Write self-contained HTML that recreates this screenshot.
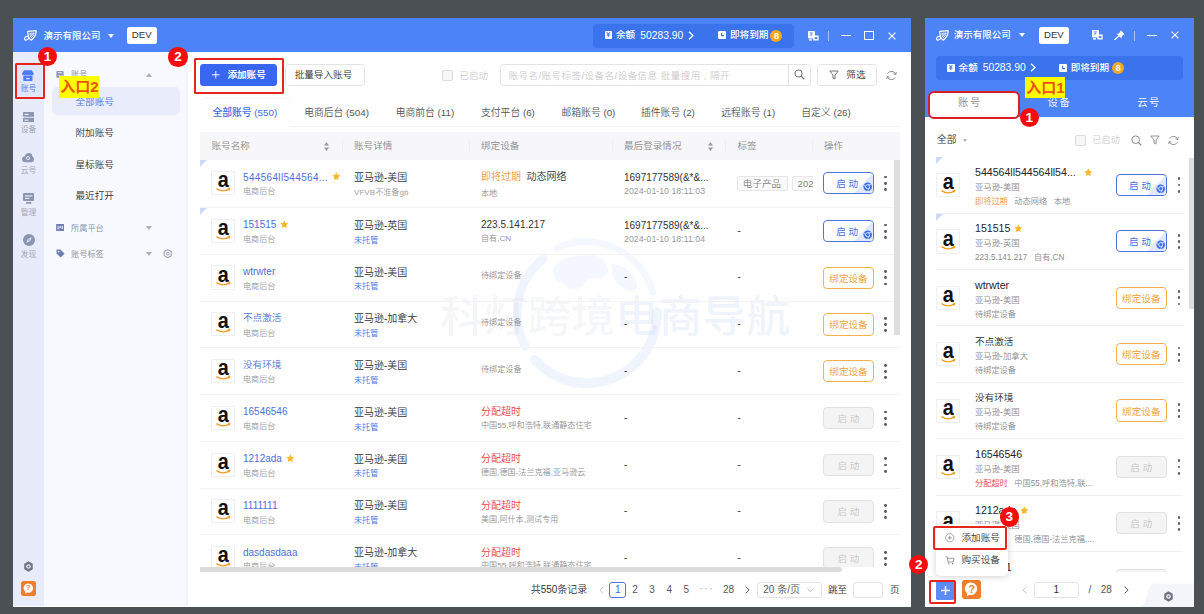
<!DOCTYPE html>
<html lang="zh-CN">
<head>
<meta charset="utf-8">
<title>账号管理</title>
<style>
*{box-sizing:border-box;margin:0;padding:0}
html,body{width:1204px;height:614px;overflow:hidden}
body{background:#4b5055;font-family:"Liberation Sans","Noto Sans CJK SC",sans-serif;font-size:9.6px;color:#333;position:relative;font-weight:350}
.abs,.t,.btn,.amz,.kebab,.tag,.row,.rrow,.num,.box{position:absolute}
.t{white-space:nowrap;line-height:1.3}
svg{display:block}
/* windows */
#mw{left:13px;top:18px;width:898.3px;height:588.5px;background:#fff}
#rw{left:924.6px;top:18px;width:269.4px;height:588.5px;background:#fff}
.hd{background:#4c83f6}
.w{color:#fff}
.co{font-size:9.5px;font-weight:500;color:#fff;letter-spacing:0}
.dev{background:#fff;border-radius:2.5px;color:#333;font-size:9.6px;text-align:center;line-height:16.6px}
.bar{background:#3b73ec;border-radius:4px}
.bt{font-size:9.6px;color:#fff;font-weight:500}
.bn{font-size:10.3px;color:#fff;font-weight:400}
.dot8{background:#f5a623;border-radius:50%;color:#fff;font-size:9px;text-align:center;font-weight:700}
/* number circles & red boxes */
.num{width:19.4px;height:19.4px;border-radius:50%;background:#f50d0d;color:#fff;font-weight:700;font-size:13.5px;text-align:center;line-height:19.4px}
.box{border:2.2px solid #e5251e;border-radius:1.5px}
.lab{background:#ffff00;color:#ec5212;font-weight:700;font-size:15px;line-height:21px;text-align:center}
/* sidebar */
.il{font-size:7.8px;color:#9ea4b4;text-align:center;width:31px}
.sd{font-size:9.6px;color:#333}
.sg{font-size:8.2px;color:#8a8f9c}
/* toolbar */
.pb{background:#3866f0;border-radius:3.5px;color:#fff;font-weight:700;font-size:9.6px}
.wb{background:#fff;border:1px solid #e3e3e6;border-radius:3.5px;color:#333;font-size:9.6px}
.tab{font-size:9.8px;color:#555}
.th{font-size:9.6px;color:#8c8c8c}
/* table rows */
.sepl{position:absolute;left:0;width:700px;height:1px;background:#f3f3f5}
.rsep{position:absolute;left:11px;width:247px;height:1px;background:#f0f0f2}
.gp{margin-left:6.6px}
.cj{font-size:9.6px !important}
.corner{position:absolute;left:0;top:0;width:0;height:0;border-top:7px solid #ccd9f6;border-right:7px solid transparent}
.amz{width:24.3px;height:24.3px;border:1px solid #efefef;background:#fff;border-radius:1px}
.amz span{position:absolute;left:0;width:100%;top:-3.8px;text-align:center;font-family:"Liberation Sans",sans-serif;font-weight:700;font-size:21.5px;line-height:24px;color:#111;transform:scaleX(0.92)}
.amz svg{position:absolute;left:0;top:0;width:22.5px;height:22.5px}
.star{display:inline-block;width:8.6px;height:8.6px;margin-left:4px;vertical-align:-0.3px}
.nm{font-size:10px;color:#4f6fd8}
.sub{font-size:8.1px;color:#9a9a9a}
.d1{font-size:10px;color:#333}
.g1{color:#939393}
.g2{color:#a3a3a3}
.bl{color:#4a72e8}
.or{color:#f5913a}
.rd{color:#e8413d}
.tag{height:15px;border:1px solid #e6e6e6;border-radius:2px;background:#fafafa;color:#858585;font-size:9.5px;line-height:13px;text-align:center;letter-spacing:0.1px;white-space:nowrap;overflow:hidden}
.tag.clip{border-right:none;border-radius:2px 0 0 2px;text-align:left;padding-left:5px}
.btn{border-radius:4px;font-size:9.6px;text-align:center;overflow:hidden;background:#fff}
.btn span{position:absolute;left:0;right:0;top:0;bottom:0;display:flex;align-items:center;justify-content:center}
.btn.go{border:1px solid #4f76d6;color:#4a6fdc}
.btn.go span{padding-right:2.5px;font-weight:400}
.btn.go .tri{position:absolute;right:0;bottom:0;width:0;height:0;border-bottom:20px solid #dfe8fc;border-left:19px solid transparent}
.btn.go .chr{position:absolute;right:0.8px;bottom:2px;width:9.4px;height:9.4px}
.btn.bind{border:1px solid #f3b04e;color:#f09a2e}
.btn.dis{border:1px solid #e1e1e1;background:#f4f4f4;color:#c6c6c6}
.kebab{width:3px;height:15px}
.kebab i{position:absolute;left:0;width:2.8px;height:2.8px;border-radius:50%;background:#5a5a5a}
.kebab i:nth-child(1){top:0}.kebab i:nth-child(2){top:6.2px}.kebab i:nth-child(3){top:12.4px}
.rn{font-size:10.6px;color:#262626}
.r2{font-size:8.4px;color:#8c8c8c}
.r3{font-size:8.2px;color:#8c8c8c}
.pg{font-size:10px;color:#555}
.wm{font-size:43.75px;color:rgba(110,115,130,0.085);font-weight:500;letter-spacing:0;line-height:1.3}
</style>
</head>
<body>

<!-- ================= MAIN WINDOW ================= -->
<div id="mw" class="abs"></div>
<div class="abs hd" style="left:13px;top:18px;width:898.3px;height:33.6px"></div>
<div class="abs" style="left:13px;top:51.6px;width:31px;height:554.9px;background:#e7ebfa"></div>
<div class="abs" style="left:44px;top:51.6px;width:144px;height:554.9px;background:#f8f9fe"></div>
<div class="abs" style="left:184px;top:51.6px;width:4px;height:554.9px;background:linear-gradient(90deg,#f8f9fe,#eff1f8)"></div>

<!-- header content -->
<svg class="abs" style="left:23.6px;top:30.1px;width:13px;height:11px" viewBox="0 0 26 22"><path d="M7.500 2.800 L24.300 1.200 Q25 12.500 14.500 20.300 Q7.500 15.500 7.500 2.800 Z" fill="none" stroke="#fff" stroke-width="2.400" stroke-linejoin="round"/><path d="M11.800 6.800 L20.300 6 Q20.200 11.800 15 15.300 Q11.900 12.500 11.800 6.800 Z" fill="none" stroke="#fff" stroke-width="1.700"/><path d="M14 9 L18 8.700 Q17.500 11 15.500 12.300 Z" fill="#fff"/><path d="M7.800 12.600 Q1.200 12.600 1.200 17.800 Q1.600 21 5.200 20 Q9 18.600 9.800 15.500" fill="none" stroke="#fff" stroke-width="2.200" stroke-linecap="round"/></svg>
<div class="t co" style="left:43.4px;top:29.8px">演示有限公司</div>
<div class="abs" style="left:107.5px;top:33.8px;width:0;height:0;border-left:3.3px solid transparent;border-right:3.3px solid transparent;border-top:4.4px solid #fff"></div>
<div class="abs dev" style="left:126.8px;top:27px;width:29.8px;height:16.6px">DEV</div>

<div class="abs bar" style="left:593px;top:23.5px;width:200.8px;height:24px"></div>
<div class="abs" style="left:604.5px;top:31.4px;width:7.6px;height:8px;background:#fff;border-radius:1px;color:#3b73ec;font-size:7px;font-weight:700;line-height:8px;text-align:center">¥</div>
<div class="t bt" style="left:616px;top:29.2px">余额</div>
<div class="t bn" style="left:640.3px;top:28.6px">50283.90</div>
<svg class="abs" style="left:688px;top:31px;width:6px;height:9px" viewBox="0 0 6 9"><path d="M1 0.8 L5 4.5 L1 8.2" fill="none" stroke="#fff" stroke-width="1.2"/></svg>
<svg class="abs" style="left:717.8px;top:31.4px;width:8px;height:8px" viewBox="0 0 8 8"><rect width="8" height="8" rx="1" fill="#fff"/><path d="M3.6 1.8 V4.6 H6" fill="none" stroke="#3b73ec" stroke-width="1.1"/></svg>
<div class="t bt" style="left:730px;top:29.2px">即将到期</div>
<div class="abs dot8" style="left:770.4px;top:29.6px;width:12px;height:12px;line-height:12px">8</div>

<svg class="abs" style="left:808px;top:30.6px;width:11px;height:10px" viewBox="0 0 11 10"><rect x="0" y="0" width="7" height="7.400" rx="0.700" fill="#fff"/><path d="M1.600 1.800 H4.800 M3.200 1.800 V4.600 M1.700 4.700 L4.700 3" stroke="#4c83f6" stroke-width="0.700" fill="none"/><rect x="5.300" y="4.600" width="5.400" height="5" rx="0.600" fill="#fff"/><rect x="6.700" y="6.100" width="2.700" height="2" fill="#4c83f6"/><rect x="1" y="8.200" width="3" height="1.400" fill="#fff"/></svg>
<div class="abs" style="left:828px;top:30.5px;width:1px;height:10px;background:rgba(255,255,255,0.5)"></div>
<div class="abs" style="left:840.5px;top:35.2px;width:10.5px;height:1px;background:#fff"></div>
<div class="abs" style="left:864.2px;top:30.8px;width:9.4px;height:9.4px;border:1.1px solid #fff"></div>
<svg class="abs" style="left:887.5px;top:31.5px;width:8px;height:8px" viewBox="0 0 8 8"><path d="M0.6 0.6 L7.4 7.4 M7.4 0.6 L0.6 7.4" stroke="#fff" stroke-width="1.2"/></svg>

<!-- icon bar -->
<div class="abs" style="left:17px;top:65px;width:25px;height:31px;background:#dfe6fb;border-radius:3px"></div>
<svg class="abs" style="left:22.2px;top:69.8px;width:11.8px;height:11.2px" viewBox="0 0 24 23"><path d="M4 0.500 H20 L24 7 Q24 10.800 20.500 10.800 Q18 10.800 17 9 Q15.500 10.800 12 10.800 Q8.500 10.800 7 9 Q6 10.800 3.500 10.800 Q0 10.800 0 7 Z" fill="#4a7cf2"/><path d="M2.500 11.600 Q5 12 7 11 Q9.500 12.300 12 12 Q14.500 12.300 17 11 Q19 12 21.500 11.600 V21 Q21.500 22.500 20 22.500 H4 Q2.500 22.500 2.500 21 Z M8.500 16.500 V19 H15.500 V16.500 Z" fill="#4a7cf2" fill-rule="evenodd"/></svg>
<div class="t il" style="left:13px;top:83.8px;color:#4a7cf2">账号</div>

<svg class="abs" style="left:22.6px;top:111.500px;width:11.400px;height:10.600px" viewBox="0 0 23 21"><rect x="0" y="0" width="23" height="9.500" rx="2" fill="#8c95b0"/><rect x="0" y="11.500" width="23" height="9.500" rx="2" fill="#8c95b0"/><rect x="3" y="3.500" width="8" height="2.500" fill="#e7ebfa"/><rect x="3" y="15" width="8" height="2.500" fill="#e7ebfa"/></svg>
<div class="t il" style="left:13px;top:125px">设备</div>

<svg class="abs" style="left:22.300px;top:153.400px;width:12px;height:9.200px" viewBox="0 0 26 20"><path d="M7 20 Q0 20 0 13.500 Q0 8 6 7.500 Q8 0 15 0 Q22 0 22.500 7.500 Q26 9 26 14 Q26 20 20 20 Z" fill="#8c95b0"/><circle cx="13" cy="11" r="3.400" fill="none" stroke="#e7ebfa" stroke-width="2"/></svg>
<div class="t il" style="left:13px;top:166.3px">云号</div>

<svg class="abs" style="left:22.8px;top:193.400px;width:11.4px;height:11px" viewBox="0 0 23 22"><rect x="0" y="0" width="23" height="16" rx="2.500" fill="#8c95b0"/><rect x="4" y="4.500" width="15" height="2.400" fill="#e7ebfa"/><rect x="4" y="9.500" width="9" height="2.400" fill="#e7ebfa"/><rect x="6" y="18" width="11" height="3.500" rx="1" fill="#8c95b0"/></svg>
<div class="t il" style="left:13px;top:208.200px">管理</div>

<svg class="abs" style="left:22.5px;top:233.5px;width:12px;height:12px" viewBox="0 0 24 24"><circle cx="12" cy="12" r="12" fill="#8c95b0"/><path d="M17.500 6.500 L14.200 14.200 L6.500 17.500 L9.800 9.800 Z" fill="#e7ebfa"/><circle cx="12" cy="12" r="1.600" fill="#8c95b0"/></svg>
<div class="t il" style="left:13px;top:250.200px">发现</div>

<svg class="abs" style="left:22.8px;top:561px;width:11px;height:11px" viewBox="0 0 22 22"><path d="M11 0.500 L19.500 5.500 V16.500 L11 21.500 L2.500 16.500 V5.500 Z" fill="#6f7480"/><circle cx="11" cy="11" r="4.600" fill="#e7ebfa"/><circle cx="11" cy="11" r="2.200" fill="#6f7480"/></svg>
<div class="abs" style="left:21px;top:581px;width:14.600px;height:14.600px;background:#ee7d2c;border-radius:2.500px"></div>
<svg class="abs" style="left:23px;top:582.600px;width:10.600px;height:11.700px" viewBox="0 0 21 23"><path d="M10.500 0.800 A9.300 9.300 0 1 1 7.500 18.900 L4.800 22 L4.600 17.200 A9.300 9.300 0 0 1 10.500 0.800 Z" fill="#fff"/></svg>
<div class="t" style="left:25.8px;top:583.400px;font-size:8px;font-weight:700;color:#ee7d2c">?</div>

<!-- second sidebar -->
<svg class="abs" style="left:55.800px;top:70.800px;width:8px;height:6.800px" viewBox="0 0 16 15"><rect width="16" height="15" rx="1.500" fill="#8b95b6"/><rect x="3.500" y="2.500" width="9" height="2.500" fill="#dfe3f2"/><rect x="2.500" y="9.500" width="11" height="1.300" fill="#dfe3f2"/></svg>
<div class="t sg" style="left:71px;top:70px">账号</div>
<div class="abs" style="left:146px;top:72.800px;width:0;height:0;border-left:3.300px solid transparent;border-right:3.300px solid transparent;border-bottom:4px solid #a9aebb"></div>
<div class="abs" style="left:52.300px;top:87px;width:127.400px;height:28px;background:#e8ecfb;border-radius:5px"></div>
<div class="t sd" style="left:75.500px;top:96.200px;color:#4a76ea">全部账号</div>
<div class="t sd" style="left:75.500px;top:127px">附加账号</div>
<div class="t sd" style="left:75.500px;top:158.500px">星标账号</div>
<div class="t sd" style="left:75.500px;top:190px">最近打开</div>

<svg class="abs" style="left:56px;top:223.900px;width:8.300px;height:7.600px" viewBox="0 0 16 15"><rect width="16" height="15" rx="1.500" fill="#6f7fb0"/><path d="M4 4 V11 M8 4 V8.500 M12 4 V10" stroke="#f8f9fe" stroke-width="2"/></svg>
<div class="t sg" style="left:71px;top:224.300px">所属平台</div>
<div class="abs" style="left:146px;top:226.400px;width:0;height:0;border-left:3.300px solid transparent;border-right:3.300px solid transparent;border-top:4px solid #a9aebb"></div>
<svg class="abs" style="left:55.800px;top:249.400px;width:9px;height:9px" viewBox="0 0 18 18"><path d="M1 1 H9 L17 9.500 L9.500 17 L1 9 Z" fill="#6f7fb0"/><circle cx="5.200" cy="5.200" r="1.700" fill="#f8f9fe"/></svg>
<div class="t sg" style="left:71px;top:250.300px">账号标签</div>
<div class="abs" style="left:146px;top:251.800px;width:0;height:0;border-left:3.300px solid transparent;border-right:3.300px solid transparent;border-top:4px solid #a9aebb"></div>
<svg class="abs" style="left:163.300px;top:248.800px;width:9.400px;height:9.400px" viewBox="0 0 18 18"><path d="M9 1.200 L15.800 5.100 V12.900 L9 16.800 L2.200 12.900 V5.100 Z" fill="none" stroke="#9aa0ad" stroke-width="2"/><circle cx="9" cy="9" r="2.700" fill="none" stroke="#9aa0ad" stroke-width="1.800"/></svg>

<!-- toolbar -->
<div class="abs pb" style="left:200px;top:64px;width:77.400px;height:22px"></div>
<svg class="abs" style="left:212.200px;top:71.300px;width:7.600px;height:7.600px" viewBox="0 0 8 8"><path d="M4 0 V8 M0 4 H8" stroke="#fff" stroke-width="1"/></svg>
<div class="t" style="left:227.400px;top:68.700px;color:#fff;font-weight:700;font-size:9.600px">添加账号</div>
<div class="abs wb" style="left:285px;top:64px;width:80px;height:22px"></div>
<div class="t" style="left:294.700px;top:68.700px;font-size:9.600px;color:#333">批量导入账号</div>

<div class="abs" style="left:442px;top:69.500px;width:11px;height:11px;border:1px solid #dcdcdc;border-radius:2px;background:#f7f7f7"></div>
<div class="t" style="left:459.500px;top:69.500px;font-size:9.500px;color:#cccccc">已启动</div>
<div class="abs wb" style="left:499.500px;top:64px;width:311px;height:22px"></div>
<div class="abs" style="left:788.400px;top:64.500px;width:1px;height:21px;background:#e3e3e6"></div>
<div class="t" style="left:508.500px;top:69.800px;font-size:9.500px;color:#cbcbcb;letter-spacing:0.480px">账号名/账号标签/设备名/设备信息 批量搜用 , 隔开</div>
<svg class="abs" style="left:794px;top:69.300px;width:11px;height:11px" viewBox="0 0 11 11"><circle cx="4.500" cy="4.500" r="3.500" fill="none" stroke="#777" stroke-width="1.100"/><path d="M7.100 7.100 L10.300 10.300" stroke="#777" stroke-width="1.300"/></svg>
<div class="abs wb" style="left:817.200px;top:64px;width:59.800px;height:22px"></div>
<svg class="abs" style="left:828.500px;top:70px;width:10px;height:10px" viewBox="0 0 10 10"><path d="M0.800 1 H9.200 L6 5 V9 L4 8 V5 Z" fill="none" stroke="#666" stroke-width="0.900" stroke-linejoin="round"/></svg>
<div class="t" style="left:846.300px;top:68.700px;font-size:9.600px;color:#333">筛选</div>
<svg class="abs" style="left:885.7px;top:69.8px;width:11px;height:11px" viewBox="0 0 11 11"><path d="M9.700 4.300 A4.400 4.400 0 0 0 1.700 3.600 M1.300 6.700 A4.400 4.400 0 0 0 9.300 7.400" fill="none" stroke="#808080" stroke-width="0.900"/><path d="M10.300 2 L9.800 4.500 L7.500 3.800 M0.700 9 L1.200 6.500 L3.500 7.200" fill="none" stroke="#808080" stroke-width="0.900"/></svg>

<!-- tabs -->
<div class="abs" style="left:200px;top:125.800px;width:700px;height:1px;background:#f3f3f5"></div>
<div class="abs" style="left:200.500px;top:99.300px;width:89px;height:27.500px;background:#fff;box-shadow:0 -1px 3px rgba(0,0,0,0.050);border-radius:3px 3px 0 0"></div>
<div class="t tab" style="top:106.6px;left:212.400px;color:#3f6be4;font-weight:500">全部账号 (550)</div>
<div class="t tab" style="top:106.6px;left:304.200px">电商后台 (504)</div>
<div class="t tab" style="top:106.6px;left:395.700px">电商前台 (11)</div>
<div class="t tab" style="top:106.6px;left:481px">支付平台 (6)</div>
<div class="t tab" style="top:106.6px;left:561.500px">邮箱账号 (0)</div>
<div class="t tab" style="top:106.6px;left:641px">插件账号 (2)</div>
<div class="t tab" style="top:106.6px;left:721.300px">远程账号 (1)</div>
<div class="t tab" style="top:106.6px;left:801.300px">自定义 (26)</div>

<!-- table header -->
<div class="abs" style="left:200px;top:132px;width:700px;height:27.500px;background:#f7f7f9"></div>
<div class="t th" style="left:211.500px;top:139.700px">账号名称</div>
<div class="t th" style="left:354px;top:139.700px">账号详情</div>
<div class="t th" style="left:481px;top:139.700px">绑定设备</div>
<div class="t th" style="left:624px;top:139.700px">最后登录情况</div>
<div class="t th" style="left:737.500px;top:139.700px">标签</div>
<div class="t th" style="left:824px;top:139.700px">操作</div>
<svg class="abs" style="left:323.500px;top:141.500px;width:5px;height:9px" viewBox="0 0 5 9"><path d="M2.500 0 L5 3.500 H0 Z M2.500 9 L5 5.500 H0 Z" fill="#9a9a9a"/></svg>
<svg class="abs" style="left:707.500px;top:141.500px;width:5px;height:9px" viewBox="0 0 5 9"><path d="M2.500 0 L5 3.500 H0 Z M2.500 9 L5 5.500 H0 Z" fill="#9a9a9a"/></svg>
<div class="abs" style="left:342px;top:139px;width:1px;height:14px;background:#f0f0f2"></div>
<div class="abs" style="left:469px;top:139px;width:1px;height:14px;background:#f0f0f2"></div>
<div class="abs" style="left:612px;top:139px;width:1px;height:14px;background:#f0f0f2"></div>
<div class="abs" style="left:725px;top:139px;width:1px;height:14px;background:#f0f0f2"></div>
<div class="abs" style="left:812px;top:139px;width:1px;height:14px;background:#f0f0f2"></div>

<!-- watermark -->
<svg class="abs" style="left:513px;top:234px;width:150px;height:154px" viewBox="0 0 150 154">
<path d="M12 112 A70 70 0 0 1 30 25" fill="none" stroke="rgba(100,150,235,0.095)" stroke-width="9" stroke-linecap="round"/>
<path d="M44 14 A70 70 0 0 1 140 58" fill="none" stroke="rgba(100,150,235,0.07)" stroke-width="7" stroke-linecap="round"/>
<path d="M144 78 A70 70 0 0 1 22 126" fill="none" stroke="rgba(100,150,235,0.095)" stroke-width="10" stroke-linecap="round"/>
<path d="M40 34 Q52 20 70 22 Q84 18 92 28 Q100 40 88 44 Q76 42 70 52 Q58 60 50 50 Q38 46 40 34 Z" fill="rgba(100,150,235,0.07)"/>
<path d="M98 30 Q112 30 122 44 Q128 56 118 58 Q106 54 100 44 Z" fill="rgba(100,150,235,0.07)"/>
</svg>
<div class="t wm" style="left:440px;top:289px">科灯跨境<span style="color:rgba(90,140,230,0.11)">电商导航</span></div>

<!-- table body -->
<div class="abs" id="tbody" style="left:200px;top:160px;width:700px;height:407px;overflow:hidden">
<div class="sepl" style="top:47.3px"></div>
<b class="corner" style="top:0.0px"></b>
<div class="amz" style="left:11px;top:10.8px"><span>a</span><svg viewBox="0 0 24 24"><path d="M5.2 18 Q12 22.3 18.6 18" fill="none" stroke="#f29a1f" stroke-width="1.5" stroke-linecap="round"/><path d="M17 17.2 L19.3 17.4 L18.3 19.5" fill="none" stroke="#f29a1f" stroke-width="1" stroke-linecap="round"/></svg></div>
<div class="t nm" style="left:43px;top:10.5px"><span style="letter-spacing:0.33px">544564ll544564...</span><svg class="star" viewBox="0 0 10 10"><path d="M5 0.4 L6.45 3.4 L9.7 3.8 L7.3 6.1 L7.95 9.4 L5 7.8 L2.05 9.4 L2.7 6.1 L0.3 3.8 L3.55 3.4 Z" fill="#fbb72b"/></svg></div>
<div class="t sub" style="left:43px;top:27.1px">电商后台</div>
<div class="t d1" style="left:154px;top:11.0px">亚马逊-美国</div>
<div class="t sub" style="left:154px;top:27.6px"><span class="g2">VFVB不准备gb</span></div>
<div class="t d1" style="left:281px;top:10.3px"><span class="or">即将过期</span>&nbsp; 动态网络</div>
<div class="t sub g1" style="left:281px;top:28.5px">本地</div>
<div class="t d1" style="left:424px;top:11.0px">1697177589(&amp;*&amp;...</div>
<div class="t sub" style="left:424px;top:26.3px;font-size:8.8px">2024-01-10 18:11:03</div>
<div class="tag" style="left:536.5px;top:16.2px;width:51px">电子产品</div>
<div class="tag clip" style="left:591.5px;top:16.2px;width:21px"><span>2024</span></div>
<div class="btn go" style="left:623.1px;top:11.9px;width:50.8px;height:22.4px"><b class="tri"></b><span>启 动</span><svg class="chr" viewBox="0 0 10 10"><circle cx="5" cy="5" r="4.6" fill="#3b6fe8"/><circle cx="5" cy="5" r="2.2" fill="none" stroke="#dfe8ff" stroke-width="1"/><path d="M5 2.8 H9 M3.1 6.1 L1.2 2.9 M6.9 6.1 L5 9.4" stroke="#dfe8ff" stroke-width="0.8" fill="none"/></svg></div>
<div class="kebab" style="left:684.2px;top:15.7px"><i></i><i></i><i></i></div>
<div class="sepl" style="top:94.0px"></div>
<b class="corner" style="top:48.2px"></b>
<div class="amz" style="left:11px;top:58.7px"><span>a</span><svg viewBox="0 0 24 24"><path d="M5.2 18 Q12 22.3 18.6 18" fill="none" stroke="#f29a1f" stroke-width="1.5" stroke-linecap="round"/><path d="M17 17.2 L19.3 17.4 L18.3 19.5" fill="none" stroke="#f29a1f" stroke-width="1" stroke-linecap="round"/></svg></div>
<div class="t nm" style="left:43px;top:58.4px">151515<svg class="star" viewBox="0 0 10 10"><path d="M5 0.4 L6.45 3.4 L9.7 3.8 L7.3 6.1 L7.95 9.4 L5 7.8 L2.05 9.4 L2.7 6.1 L0.3 3.8 L3.55 3.4 Z" fill="#fbb72b"/></svg></div>
<div class="t sub" style="left:43px;top:75.0px">电商后台</div>
<div class="t d1" style="left:154px;top:58.9px">亚马逊-英国</div>
<div class="t sub" style="left:154px;top:75.5px"><span class="bl">未托管</span></div>
<div class="t d1" style="left:281px;top:58.4px">223.5.141.217</div>
<div class="t sub g1" style="left:281px;top:74.1px">自有,CN</div>
<div class="t d1" style="left:424px;top:58.9px">1697177589(&amp;*&amp;...</div>
<div class="t sub" style="left:424px;top:74.2px;font-size:8.8px">2024-01-10 18:11:04</div>
<div class="t d1" style="left:537.5px;top:63.7px">-</div>
<div class="btn go" style="left:623.1px;top:59.8px;width:50.8px;height:22.4px"><b class="tri"></b><span>启 动</span><svg class="chr" viewBox="0 0 10 10"><circle cx="5" cy="5" r="4.6" fill="#3b6fe8"/><circle cx="5" cy="5" r="2.2" fill="none" stroke="#dfe8ff" stroke-width="1"/><path d="M5 2.8 H9 M3.1 6.1 L1.2 2.9 M6.9 6.1 L5 9.4" stroke="#dfe8ff" stroke-width="0.8" fill="none"/></svg></div>
<div class="kebab" style="left:684.2px;top:63.6px"><i></i><i></i><i></i></div>
<div class="sepl" style="top:140.7px"></div>
<div class="amz" style="left:11px;top:105.4px"><span>a</span><svg viewBox="0 0 24 24"><path d="M5.2 18 Q12 22.3 18.6 18" fill="none" stroke="#f29a1f" stroke-width="1.5" stroke-linecap="round"/><path d="M17 17.2 L19.3 17.4 L18.3 19.5" fill="none" stroke="#f29a1f" stroke-width="1" stroke-linecap="round"/></svg></div>
<div class="t nm" style="left:43px;top:105.1px">wtrwter</div>
<div class="t sub" style="left:43px;top:121.8px">电商后台</div>
<div class="t d1" style="left:154px;top:105.6px">亚马逊-美国</div>
<div class="t sub" style="left:154px;top:122.2px"><span class="bl">未托管</span></div>
<div class="t sub g1" style="left:281px;top:111.3px">待绑定设备</div>
<div class="t d1" style="left:424px;top:110.4px">-</div>
<div class="t d1" style="left:537.5px;top:110.4px">-</div>
<div class="btn bind" style="left:623.1px;top:106.5px;width:50.8px;height:22.4px"><span>绑定设备</span></div>
<div class="kebab" style="left:684.2px;top:110.3px"><i></i><i></i><i></i></div>
<div class="sepl" style="top:187.4px"></div>
<div class="amz" style="left:11px;top:152.2px"><span>a</span><svg viewBox="0 0 24 24"><path d="M5.2 18 Q12 22.3 18.6 18" fill="none" stroke="#f29a1f" stroke-width="1.5" stroke-linecap="round"/><path d="M17 17.2 L19.3 17.4 L18.3 19.5" fill="none" stroke="#f29a1f" stroke-width="1" stroke-linecap="round"/></svg></div>
<div class="t nm cj" style="left:43px;top:152.2px">不点激活</div>
<div class="t sub" style="left:43px;top:168.5px">电商后台</div>
<div class="t d1" style="left:154px;top:152.4px">亚马逊-加拿大</div>
<div class="t sub" style="left:154px;top:169.0px"><span class="bl">未托管</span></div>
<div class="t sub g1" style="left:281px;top:158.1px">待绑定设备</div>
<div class="t d1" style="left:424px;top:157.2px">-</div>
<div class="t d1" style="left:537.5px;top:157.2px">-</div>
<div class="btn bind" style="left:623.1px;top:153.3px;width:50.8px;height:22.4px"><span>绑定设备</span></div>
<div class="kebab" style="left:684.2px;top:157.1px"><i></i><i></i><i></i></div>
<div class="sepl" style="top:234.1px"></div>
<div class="amz" style="left:11px;top:198.9px"><span>a</span><svg viewBox="0 0 24 24"><path d="M5.2 18 Q12 22.3 18.6 18" fill="none" stroke="#f29a1f" stroke-width="1.5" stroke-linecap="round"/><path d="M17 17.2 L19.3 17.4 L18.3 19.5" fill="none" stroke="#f29a1f" stroke-width="1" stroke-linecap="round"/></svg></div>
<div class="t nm cj" style="left:43px;top:198.9px">没有环境</div>
<div class="t sub" style="left:43px;top:215.2px">电商后台</div>
<div class="t d1" style="left:154px;top:199.2px">亚马逊-美国</div>
<div class="t sub" style="left:154px;top:215.8px"><span class="bl">未托管</span></div>
<div class="t sub g1" style="left:281px;top:204.8px">待绑定设备</div>
<div class="t d1" style="left:424px;top:203.9px">-</div>
<div class="t d1" style="left:537.5px;top:203.9px">-</div>
<div class="btn bind" style="left:623.1px;top:200.0px;width:50.8px;height:22.4px"><span>绑定设备</span></div>
<div class="kebab" style="left:684.2px;top:203.8px"><i></i><i></i><i></i></div>
<div class="sepl" style="top:280.8px"></div>
<div class="amz" style="left:11px;top:245.7px"><span>a</span><svg viewBox="0 0 24 24"><path d="M5.2 18 Q12 22.3 18.6 18" fill="none" stroke="#f29a1f" stroke-width="1.5" stroke-linecap="round"/><path d="M17 17.2 L19.3 17.4 L18.3 19.5" fill="none" stroke="#f29a1f" stroke-width="1" stroke-linecap="round"/></svg></div>
<div class="t nm" style="left:43px;top:245.4px">16546546</div>
<div class="t sub" style="left:43px;top:262.0px">电商后台</div>
<div class="t d1" style="left:154px;top:245.9px">亚马逊-美国</div>
<div class="t sub" style="left:154px;top:262.5px"><span class="bl">未托管</span></div>
<div class="t d1" style="left:281px;top:245.4px"><span class="rd">分配超时</span></div>
<div class="t sub g1" style="left:281px;top:261.1px">中国55,呼和浩特,联通静态住宅</div>
<div class="t d1" style="left:424px;top:250.7px">-</div>
<div class="t d1" style="left:537.5px;top:250.7px">-</div>
<div class="btn dis" style="left:623.1px;top:246.8px;width:50.8px;height:22.4px"><span>启 动</span></div>
<div class="kebab" style="left:684.2px;top:250.6px"><i></i><i></i><i></i></div>
<div class="sepl" style="top:327.5px"></div>
<div class="amz" style="left:11px;top:292.5px"><span>a</span><svg viewBox="0 0 24 24"><path d="M5.2 18 Q12 22.3 18.6 18" fill="none" stroke="#f29a1f" stroke-width="1.5" stroke-linecap="round"/><path d="M17 17.2 L19.3 17.4 L18.3 19.5" fill="none" stroke="#f29a1f" stroke-width="1" stroke-linecap="round"/></svg></div>
<div class="t nm" style="left:43px;top:292.2px">1212ada<svg class="star" viewBox="0 0 10 10"><path d="M5 0.4 L6.45 3.4 L9.7 3.8 L7.3 6.1 L7.95 9.4 L5 7.8 L2.05 9.4 L2.7 6.1 L0.3 3.8 L3.55 3.4 Z" fill="#fbb72b"/></svg></div>
<div class="t sub" style="left:43px;top:308.8px">电商后台</div>
<div class="t d1" style="left:154px;top:292.7px">亚马逊-美国</div>
<div class="t sub" style="left:154px;top:309.2px"><span class="bl">未托管</span></div>
<div class="t d1" style="left:281px;top:292.2px"><span class="rd">分配超时</span></div>
<div class="t sub g1" style="left:281px;top:307.9px">德国,德国-法兰克福,亚马逊云</div>
<div class="t d1" style="left:424px;top:297.5px">-</div>
<div class="t d1" style="left:537.5px;top:297.5px">-</div>
<div class="btn dis" style="left:623.1px;top:293.6px;width:50.8px;height:22.4px"><span>启 动</span></div>
<div class="kebab" style="left:684.2px;top:297.4px"><i></i><i></i><i></i></div>
<div class="sepl" style="top:374.2px"></div>
<div class="amz" style="left:11px;top:339.2px"><span>a</span><svg viewBox="0 0 24 24"><path d="M5.2 18 Q12 22.3 18.6 18" fill="none" stroke="#f29a1f" stroke-width="1.5" stroke-linecap="round"/><path d="M17 17.2 L19.3 17.4 L18.3 19.5" fill="none" stroke="#f29a1f" stroke-width="1" stroke-linecap="round"/></svg></div>
<div class="t nm" style="left:43px;top:338.9px">1111111</div>
<div class="t sub" style="left:43px;top:355.5px">电商后台</div>
<div class="t d1" style="left:154px;top:339.4px">亚马逊-美国</div>
<div class="t sub" style="left:154px;top:356.0px"><span class="bl">未托管</span></div>
<div class="t d1" style="left:281px;top:338.9px"><span class="rd">分配超时</span></div>
<div class="t sub g1" style="left:281px;top:354.6px">美国,阿什本,测试专用</div>
<div class="t d1" style="left:424px;top:344.2px">-</div>
<div class="t d1" style="left:537.5px;top:344.2px">-</div>
<div class="btn dis" style="left:623.1px;top:340.3px;width:50.8px;height:22.4px"><span>启 动</span></div>
<div class="kebab" style="left:684.2px;top:344.1px"><i></i><i></i><i></i></div>
<div class="sepl" style="top:420.9px"></div>
<div class="amz" style="left:11px;top:386.0px"><span>a</span><svg viewBox="0 0 24 24"><path d="M5.2 18 Q12 22.3 18.6 18" fill="none" stroke="#f29a1f" stroke-width="1.5" stroke-linecap="round"/><path d="M17 17.2 L19.3 17.4 L18.3 19.5" fill="none" stroke="#f29a1f" stroke-width="1" stroke-linecap="round"/></svg></div>
<div class="t nm" style="left:43px;top:385.7px">dasdasdaaa</div>
<div class="t sub" style="left:43px;top:402.2px">电商后台</div>
<div class="t d1" style="left:154px;top:386.2px">亚马逊-加拿大</div>
<div class="t sub" style="left:154px;top:402.8px"><span class="bl">未托管</span></div>
<div class="t d1" style="left:281px;top:385.7px"><span class="rd">分配超时</span></div>
<div class="t sub g1" style="left:281px;top:401.4px">中国55,呼和浩特,联通静态住宅</div>
<div class="t d1" style="left:424px;top:391.0px">-</div>
<div class="t d1" style="left:537.5px;top:391.0px">-</div>
<div class="btn dis" style="left:623.1px;top:387.1px;width:50.8px;height:22.4px"><span>启 动</span></div>
<div class="kebab" style="left:684.2px;top:390.9px"><i></i><i></i><i></i></div>
</div>
<div class="abs" style="left:894.300px;top:160px;width:5.400px;height:175px;background:#dedede"></div>
<div class="abs" style="left:200px;top:567px;width:642px;height:5px;background:#dcdcdc;border-radius:0 2.500px 2.500px 0"></div>

<!-- pagination -->
<div class="t pg" style="left:530.700px;top:583.400px;color:#333">共550条记录</div>
<svg class="abs" style="left:598.500px;top:586px;width:5px;height:8px" viewBox="0 0 5 8"><path d="M4.300 0.600 L0.900 4 L4.300 7.400" fill="none" stroke="#c8c8c8" stroke-width="1"/></svg>
<div class="abs" style="left:609.200px;top:581.900px;width:17.200px;height:16px;border:1px solid #4a76e4;border-radius:3px"></div>
<div class="t pg" style="left:615px;top:583.400px;color:#3f6be4">1</div>
<div class="t pg" style="left:632.200px;top:583.400px">2</div>
<div class="t pg" style="left:649.300px;top:583.400px">3</div>
<div class="t pg" style="left:666.400px;top:583.400px">4</div>
<div class="t pg" style="left:683.500px;top:583.400px">5</div>
<div class="t pg" style="left:699.500px;top:582.400px;color:#aaa;letter-spacing:1.500px">···</div>
<div class="t pg" style="left:722.900px;top:583.400px">28</div>
<svg class="abs" style="left:744.500px;top:586px;width:5px;height:8px" viewBox="0 0 5 8"><path d="M0.700 0.600 L4.100 4 L0.700 7.400" fill="none" stroke="#555" stroke-width="1"/></svg>
<div class="abs wb" style="left:757.400px;top:581.900px;width:64.200px;height:16px;border-radius:3px"></div>
<div class="t pg" style="left:763.300px;top:583.400px">20 条/页</div>
<svg class="abs" style="left:806.500px;top:588px;width:7px;height:4.500px" viewBox="0 0 7 4.500"><path d="M0.500 0.500 L3.500 3.800 L6.500 0.500" fill="none" stroke="#bbb" stroke-width="0.900"/></svg>
<div class="t pg" style="left:827.900px;top:583.600px;color:#333;font-size:9.600px">跳至</div>
<div class="abs wb" style="left:853.300px;top:581.900px;width:30px;height:16px;border-radius:3px"></div>
<div class="t pg" style="left:890px;top:583.600px;color:#333;font-size:9.600px">页</div>

<!-- annotations main -->
<div class="box" style="left:15px;top:63px;width:29.500px;height:35.500px"></div>
<div class="num" style="left:37.700px;top:47px">1</div>
<div class="lab abs" style="left:59.200px;top:76.300px;width:40.300px;height:21.300px">入口2</div>
<div class="box" style="left:194px;top:58px;width:89.500px;height:35.500px"></div>
<div class="num" style="left:168.300px;top:47.300px">2</div>

<!-- ================= RIGHT WINDOW ================= -->
<div id="rw" class="abs"></div>
<div class="abs hd" style="left:924.6px;top:18px;width:269.4px;height:98.500px"></div>
<svg class="abs" style="left:935.6px;top:29.8px;width:13px;height:11px" viewBox="0 0 26 22"><path d="M7.500 2.800 L24.300 1.200 Q25 12.500 14.500 20.300 Q7.500 15.500 7.500 2.800 Z" fill="none" stroke="#fff" stroke-width="2.400" stroke-linejoin="round"/><path d="M11.800 6.800 L20.300 6 Q20.200 11.800 15 15.300 Q11.900 12.500 11.800 6.800 Z" fill="none" stroke="#fff" stroke-width="1.700"/><path d="M14 9 L18 8.700 Q17.500 11 15.500 12.300 Z" fill="#fff"/><path d="M7.800 12.600 Q1.200 12.600 1.200 17.800 Q1.600 21 5.200 20 Q9 18.600 9.800 15.500" fill="none" stroke="#fff" stroke-width="2.200" stroke-linecap="round"/></svg>
<div class="t co" style="left:953.800px;top:29.200px">演示有限公司</div>
<div class="abs" style="left:1019.200px;top:33.200px;width:0;height:0;border-left:3.600px solid transparent;border-right:3.600px solid transparent;border-top:4.500px solid #fff"></div>
<div class="abs dev" style="left:1038.900px;top:27px;width:29.900px;height:16.800px">DEV</div>
<svg class="abs" style="left:1091.5px;top:30.4px;width:11px;height:10px" viewBox="0 0 11 10"><rect x="0" y="0" width="7" height="7.400" rx="0.700" fill="#fff"/><path d="M1.600 1.800 H4.800 M3.200 1.800 V4.600 M1.700 4.700 L4.700 3" stroke="#4c83f6" stroke-width="0.700" fill="none"/><rect x="5.300" y="4.600" width="5.400" height="5" rx="0.600" fill="#fff"/><rect x="6.700" y="6.100" width="2.700" height="2" fill="#4c83f6"/><rect x="1" y="8.200" width="3" height="1.400" fill="#fff"/></svg>
<svg class="abs" style="left:1114px;top:29.800px;width:11px;height:10.200px" viewBox="0 0 11 10.200"><path d="M6.600 0.300 L10.700 4.200 L9.300 4.800 L7.700 6.500 L7.500 8.600 L2.700 3.800 L4.700 3.500 L6.200 1.900 Z" fill="#fff"/><path d="M4.800 6 L0.600 9.900" stroke="#fff" stroke-width="1.300" stroke-linecap="round"/></svg>
<div class="abs" style="left:1134.300px;top:30.500px;width:1px;height:10px;background:rgba(255,255,255,0.500)"></div>
<div class="abs" style="left:1146.500px;top:35px;width:10.500px;height:1px;background:#fff"></div>
<svg class="abs" style="left:1170.500px;top:31.300px;width:8px;height:8px" viewBox="0 0 8 8"><path d="M0.600 0.600 L7.400 7.400 M7.400 0.600 L0.600 7.400" stroke="#fff" stroke-width="1.200"/></svg>

<div class="abs bar" style="left:935.700px;top:55.800px;width:247.200px;height:24.600px"></div>
<div class="abs" style="left:947px;top:63.800px;width:7.600px;height:8px;background:#fff;border-radius:1px;color:#3b73ec;font-size:7px;font-weight:700;line-height:8px;text-align:center">¥</div>
<div class="t bt" style="left:958.600px;top:61.600px">余额</div>
<div class="t bn" style="left:982.700px;top:61px">50283.90</div>
<svg class="abs" style="left:1030px;top:63.400px;width:6px;height:9px" viewBox="0 0 6 9"><path d="M1 0.800 L5 4.500 L1 8.200" fill="none" stroke="#fff" stroke-width="1.200"/></svg>
<svg class="abs" style="left:1059.200px;top:63.800px;width:8px;height:8px" viewBox="0 0 8 8"><rect width="8" height="8" rx="1" fill="#fff"/><path d="M3.600 1.800 V4.600 H6" fill="none" stroke="#3b73ec" stroke-width="1.100"/></svg>
<div class="t bt" style="left:1070.700px;top:61.600px">即将到期</div>
<div class="abs dot8" style="left:1112.200px;top:62px;width:12px;height:12px;line-height:12px">8</div>

<!-- right tabs -->
<div class="abs" style="left:928px;top:90.600px;width:92.200px;height:28.200px;background:#fff;border:2.400px solid #d81e26;border-radius:6px"></div>
<div class="t" style="left:958px;top:96px;font-size:10.400px;color:#8a8a8a;letter-spacing:1.500px">账号</div>
<div class="t w" style="left:1047.500px;top:96px;font-size:10.400px;letter-spacing:1.500px">设备</div>
<div class="t w" style="left:1137.200px;top:96px;font-size:10.400px;letter-spacing:1.500px">云号</div>
<div class="lab abs" style="left:1025.400px;top:77px;width:40px;height:21px">入口1</div>
<div class="num" style="left:1019.500px;top:108px">1</div>

<!-- right filter row -->
<div class="t" style="left:936.900px;top:133.800px;font-size:9.800px;color:#333">全部</div>
<div class="abs" style="left:962.800px;top:138.500px;width:0;height:0;border-left:2.600px solid transparent;border-right:2.600px solid transparent;border-top:3.300px solid #b0b0b0"></div>
<div class="abs" style="left:1074.800px;top:134.700px;width:11px;height:11px;border:1px solid #dcdcdc;border-radius:2px;background:#f7f7f7"></div>
<div class="t" style="left:1092.300px;top:135px;font-size:9.200px;color:#cdcdcd">已启动</div>
<svg class="abs" style="left:1131px;top:134.500px;width:11px;height:11px" viewBox="0 0 11 11"><circle cx="4.700" cy="4.700" r="3.800" fill="none" stroke="#888" stroke-width="1"/><path d="M7.500 7.500 L10.300 10.300" stroke="#888" stroke-width="1.100"/></svg>
<svg class="abs" style="left:1150px;top:135px;width:10px;height:10px" viewBox="0 0 10 10"><path d="M0.800 1 H9.200 L6 5 V9 L4 8 V5 Z" fill="none" stroke="#888" stroke-width="0.900" stroke-linejoin="round"/></svg>
<svg class="abs" style="left:1168.2px;top:134.8px;width:11px;height:11px" viewBox="0 0 11 11"><path d="M9.700 4.300 A4.400 4.400 0 0 0 1.700 3.600 M1.300 6.700 A4.400 4.400 0 0 0 9.300 7.400" fill="none" stroke="#8a8a8a" stroke-width="0.900"/><path d="M10.300 2 L9.800 4.500 L7.500 3.800 M0.700 9 L1.200 6.500 L3.500 7.200" fill="none" stroke="#8a8a8a" stroke-width="0.900"/></svg>

<!-- right list -->
<div class="abs" id="rlist" style="left:925px;top:156.800px;width:269px;height:415.200px;overflow:hidden">
<div class="rsep" style="top:55.9px"></div>
<b class="corner" style="left:11px;top:0.6px"></b>
<div class="amz" style="left:11px;top:16.2px"><span>a</span><svg viewBox="0 0 24 24"><path d="M5.2 18 Q12 22.3 18.6 18" fill="none" stroke="#f29a1f" stroke-width="1.5" stroke-linecap="round"/><path d="M17 17.2 L19.3 17.4 L18.3 19.5" fill="none" stroke="#f29a1f" stroke-width="1" stroke-linecap="round"/></svg></div>
<div class="t rn" style="left:50px;top:9.2px">544564ll544564ll54...<svg class="star" style="margin-left:8px" viewBox="0 0 10 10"><path d="M5 0.4 L6.45 3.4 L9.7 3.8 L7.3 6.1 L7.95 9.4 L5 7.8 L2.05 9.4 L2.7 6.1 L0.3 3.8 L3.55 3.4 Z" fill="#fbb72b"/></svg></div>
<div class="t r2" style="left:50px;top:25.0px">亚马逊-美国</div>
<div class="t r3" style="left:50px;top:40.0px"><span class="or">即将过期</span><span class="gp">动态网络</span><span class="gp">本地</span></div>
<div class="btn go" style="left:190.8px;top:17.0px;width:51px;height:22.3px"><b class="tri"></b><span>启 动</span><svg class="chr" viewBox="0 0 10 10"><circle cx="5" cy="5" r="4.6" fill="#3b6fe8"/><circle cx="5" cy="5" r="2.2" fill="none" stroke="#dfe8ff" stroke-width="1"/><path d="M5 2.8 H9 M3.1 6.1 L1.2 2.9 M6.9 6.1 L5 9.4" stroke="#dfe8ff" stroke-width="0.8" fill="none"/></svg></div>
<div class="kebab" style="left:252.5px;top:20.6px"><i></i><i></i><i></i></div>
<div class="rsep" style="top:112.3px"></div>
<b class="corner" style="left:11px;top:57.0px"></b>
<div class="amz" style="left:11px;top:72.6px"><span>a</span><svg viewBox="0 0 24 24"><path d="M5.2 18 Q12 22.3 18.6 18" fill="none" stroke="#f29a1f" stroke-width="1.5" stroke-linecap="round"/><path d="M17 17.2 L19.3 17.4 L18.3 19.5" fill="none" stroke="#f29a1f" stroke-width="1" stroke-linecap="round"/></svg></div>
<div class="t rn" style="left:50px;top:65.6px">151515<svg class="star" viewBox="0 0 10 10"><path d="M5 0.4 L6.45 3.4 L9.7 3.8 L7.3 6.1 L7.95 9.4 L5 7.8 L2.05 9.4 L2.7 6.1 L0.3 3.8 L3.55 3.4 Z" fill="#fbb72b"/></svg></div>
<div class="t r2" style="left:50px;top:81.4px">亚马逊-英国</div>
<div class="t r3" style="left:50px;top:96.4px">223.5.141.217<span class="gp">自有,CN</span></div>
<div class="btn go" style="left:190.8px;top:73.4px;width:51px;height:22.3px"><b class="tri"></b><span>启 动</span><svg class="chr" viewBox="0 0 10 10"><circle cx="5" cy="5" r="4.6" fill="#3b6fe8"/><circle cx="5" cy="5" r="2.2" fill="none" stroke="#dfe8ff" stroke-width="1"/><path d="M5 2.8 H9 M3.1 6.1 L1.2 2.9 M6.9 6.1 L5 9.4" stroke="#dfe8ff" stroke-width="0.8" fill="none"/></svg></div>
<div class="kebab" style="left:252.5px;top:77.0px"><i></i><i></i><i></i></div>
<div class="rsep" style="top:168.7px"></div>
<div class="amz" style="left:11px;top:129.0px"><span>a</span><svg viewBox="0 0 24 24"><path d="M5.2 18 Q12 22.3 18.6 18" fill="none" stroke="#f29a1f" stroke-width="1.5" stroke-linecap="round"/><path d="M17 17.2 L19.3 17.4 L18.3 19.5" fill="none" stroke="#f29a1f" stroke-width="1" stroke-linecap="round"/></svg></div>
<div class="t rn" style="left:50px;top:122.0px">wtrwter</div>
<div class="t r2" style="left:50px;top:137.8px">亚马逊-美国</div>
<div class="t r3" style="left:50px;top:152.8px">待绑定设备</div>
<div class="btn bind" style="left:190.8px;top:129.8px;width:51px;height:22.3px"><span>绑定设备</span></div>
<div class="kebab" style="left:252.5px;top:133.4px"><i></i><i></i><i></i></div>
<div class="rsep" style="top:225.1px"></div>
<div class="amz" style="left:11px;top:185.4px"><span>a</span><svg viewBox="0 0 24 24"><path d="M5.2 18 Q12 22.3 18.6 18" fill="none" stroke="#f29a1f" stroke-width="1.5" stroke-linecap="round"/><path d="M17 17.2 L19.3 17.4 L18.3 19.5" fill="none" stroke="#f29a1f" stroke-width="1" stroke-linecap="round"/></svg></div>
<div class="t rn cj" style="left:50px;top:179.1px">不点激活</div>
<div class="t r2" style="left:50px;top:194.2px">亚马逊-加拿大</div>
<div class="t r3" style="left:50px;top:209.2px">待绑定设备</div>
<div class="btn bind" style="left:190.8px;top:186.2px;width:51px;height:22.3px"><span>绑定设备</span></div>
<div class="kebab" style="left:252.5px;top:189.8px"><i></i><i></i><i></i></div>
<div class="rsep" style="top:281.5px"></div>
<div class="amz" style="left:11px;top:241.8px"><span>a</span><svg viewBox="0 0 24 24"><path d="M5.2 18 Q12 22.3 18.6 18" fill="none" stroke="#f29a1f" stroke-width="1.5" stroke-linecap="round"/><path d="M17 17.2 L19.3 17.4 L18.3 19.5" fill="none" stroke="#f29a1f" stroke-width="1" stroke-linecap="round"/></svg></div>
<div class="t rn cj" style="left:50px;top:235.5px">没有环境</div>
<div class="t r2" style="left:50px;top:250.6px">亚马逊-美国</div>
<div class="t r3" style="left:50px;top:265.6px">待绑定设备</div>
<div class="btn bind" style="left:190.8px;top:242.6px;width:51px;height:22.3px"><span>绑定设备</span></div>
<div class="kebab" style="left:252.5px;top:246.2px"><i></i><i></i><i></i></div>
<div class="rsep" style="top:337.9px"></div>
<div class="amz" style="left:11px;top:298.2px"><span>a</span><svg viewBox="0 0 24 24"><path d="M5.2 18 Q12 22.3 18.6 18" fill="none" stroke="#f29a1f" stroke-width="1.5" stroke-linecap="round"/><path d="M17 17.2 L19.3 17.4 L18.3 19.5" fill="none" stroke="#f29a1f" stroke-width="1" stroke-linecap="round"/></svg></div>
<div class="t rn" style="left:50px;top:291.2px">16546546</div>
<div class="t r2" style="left:50px;top:307.0px">亚马逊-美国</div>
<div class="t r3" style="left:50px;top:322.0px"><span class="rd">分配超时</span><span class="gp">中国55,呼和浩特,联...</span></div>
<div class="btn dis" style="left:190.8px;top:299.0px;width:51px;height:22.3px"><span>启 动</span></div>
<div class="kebab" style="left:252.5px;top:302.6px"><i></i><i></i><i></i></div>
<div class="rsep" style="top:394.3px"></div>
<div class="amz" style="left:11px;top:354.6px"><span>a</span><svg viewBox="0 0 24 24"><path d="M5.2 18 Q12 22.3 18.6 18" fill="none" stroke="#f29a1f" stroke-width="1.5" stroke-linecap="round"/><path d="M17 17.2 L19.3 17.4 L18.3 19.5" fill="none" stroke="#f29a1f" stroke-width="1" stroke-linecap="round"/></svg></div>
<div class="t rn" style="left:50px;top:347.6px">1212ada<svg class="star" viewBox="0 0 10 10"><path d="M5 0.4 L6.45 3.4 L9.7 3.8 L7.3 6.1 L7.95 9.4 L5 7.8 L2.05 9.4 L2.7 6.1 L0.3 3.8 L3.55 3.4 Z" fill="#fbb72b"/></svg></div>
<div class="t r2" style="left:50px;top:363.4px">亚马逊-美国</div>
<div class="t r3" style="left:50px;top:378.4px"><span class="rd">分配超时</span><span class="gp">德国,德国-法兰克福,...</span></div>
<div class="btn dis" style="left:190.8px;top:355.4px;width:51px;height:22.3px"><span>启 动</span></div>
<div class="kebab" style="left:252.5px;top:359.0px"><i></i><i></i><i></i></div>
<div class="rsep" style="top:450.7px"></div>
<div class="amz" style="left:11px;top:411.0px"><span>a</span><svg viewBox="0 0 24 24"><path d="M5.2 18 Q12 22.3 18.6 18" fill="none" stroke="#f29a1f" stroke-width="1.5" stroke-linecap="round"/><path d="M17 17.2 L19.3 17.4 L18.3 19.5" fill="none" stroke="#f29a1f" stroke-width="1" stroke-linecap="round"/></svg></div>
<div class="t rn" style="left:50px;top:404.0px">1111111</div>
<div class="t r2" style="left:50px;top:419.8px">亚马逊-美国</div>
<div class="t r3" style="left:50px;top:434.8px"><span class="rd">分配超时</span><span class="gp">美国,阿什本,测试专用</span></div>
<div class="btn dis" style="left:190.8px;top:411.8px;width:51px;height:22.3px"><span>启 动</span></div>
<div class="kebab" style="left:252.5px;top:415.4px"><i></i><i></i><i></i></div>
</div>
<div class="abs" style="left:1188.800px;top:157.500px;width:5.200px;height:151.500px;background:#dedede"></div>

<!-- right bottom bar -->
<div class="abs" style="left:924.6px;top:572px;width:269.4px;height:34.5px;background:#fff"></div>
<svg class="abs" style="left:1140px;top:583px;width:54px;height:23.500px" viewBox="0 0 54 23.500"><path d="M0 24 Q5 22 7 12 Q9 0.500 16 0.500 H54 V24 Z" fill="#f4f5fa"/></svg>
<svg class="abs" style="left:1163px;top:590.700px;width:11px;height:11px" viewBox="0 0 22 22"><path d="M11 0.500 L19.500 5.500 V16.500 L11 21.500 L2.500 16.500 V5.500 Z" fill="#6f7480"/><circle cx="11" cy="11" r="4.600" fill="#f4f5fa"/><circle cx="11" cy="11" r="2.200" fill="#6f7480"/></svg>
<div class="abs" style="left:936.200px;top:581.200px;width:17.600px;height:18.600px;background:#5b8bf5;border-radius:1.500px"></div>
<svg class="abs" style="left:940.500px;top:586px;width:9px;height:9px" viewBox="0 0 9 9"><path d="M4.500 0 V9 M0 4.500 H9" stroke="#fff" stroke-width="1.500"/></svg>
<div class="abs" style="left:961.700px;top:580px;width:19.300px;height:19.300px;background:#ee7d2c;border-radius:3px"></div>
<svg class="abs" style="left:964.300px;top:582px;width:14px;height:15.500px" viewBox="0 0 21 23"><path d="M10.500 0.800 A9.300 9.300 0 1 1 7.500 18.900 L4.800 22 L4.600 17.200 A9.300 9.300 0 0 1 10.500 0.800 Z" fill="#fff"/></svg>
<div class="t" style="left:968.400px;top:582.600px;font-size:10.500px;font-weight:700;color:#ee7d2c">?</div>
<svg class="abs" style="left:1022px;top:586px;width:5px;height:8px" viewBox="0 0 5 8"><path d="M4.300 0.600 L0.900 4 L4.300 7.400" fill="none" stroke="#c8c8c8" stroke-width="1"/></svg>
<div class="abs wb" style="left:1033.800px;top:582.400px;width:45px;height:15.600px;border-radius:3px"></div>
<div class="t pg" style="left:1053.500px;top:583.300px;color:#333">1</div>
<div class="t pg" style="left:1088.500px;top:583.300px">/</div>
<div class="t pg" style="left:1100.800px;top:583.300px">28</div>
<svg class="abs" style="left:1124px;top:586px;width:5px;height:8px" viewBox="0 0 5 8"><path d="M0.700 0.600 L4.100 4 L0.700 7.400" fill="none" stroke="#555" stroke-width="1"/></svg>

<!-- popup -->
<div class="abs" style="left:935.700px;top:524px;width:72.800px;height:52.400px;background:#fff;border-radius:5px;box-shadow:0 1px 6px rgba(0,0,0,0.180)"></div>
<svg class="abs" style="left:945.400px;top:533px;width:9.600px;height:9.600px" viewBox="0 0 10 10"><circle cx="5" cy="5" r="4.300" fill="none" stroke="#808080" stroke-width="0.700"/><path d="M5 3 V7 M3 5 H7" stroke="#808080" stroke-width="0.800"/></svg>
<div class="t" style="left:961.500px;top:531.600px;font-size:9.600px;color:#333">添加账号</div>
<svg class="abs" style="left:945px;top:556px;width:10px;height:9px" viewBox="0 0 10 9"><path d="M0.300 0.800 H2 L3.200 6 H8.200 L9 2.300 H2.500" fill="none" stroke="#777" stroke-width="0.700"/><circle cx="3.800" cy="7.700" r="0.700" fill="#777"/><circle cx="7.600" cy="7.700" r="0.700" fill="#777"/></svg>
<div class="t" style="left:961.500px;top:554.300px;font-size:9.600px;color:#333">购买设备</div>

<!-- annotations right -->
<div class="box" style="left:933.300px;top:526.300px;width:73.500px;height:23.600px;border-radius:2.500px"></div>
<div class="num" style="left:999.500px;top:507.400px">3</div>
<div class="box" style="left:929px;top:580px;width:27px;height:23.600px;border-radius:2px"></div>
<div class="num" style="left:909.100px;top:555.100px">2</div>

</body>
</html>
